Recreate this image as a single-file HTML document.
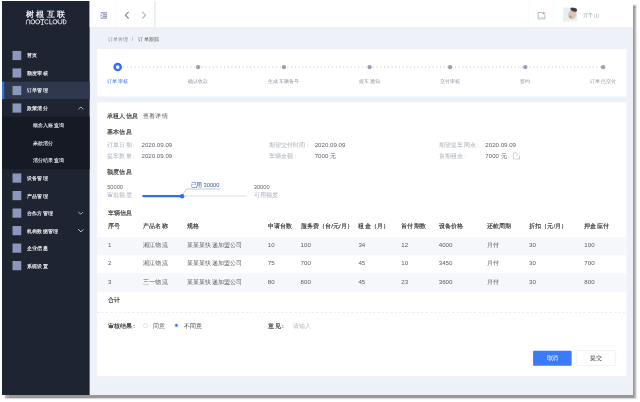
<!DOCTYPE html>
<html><head><meta charset="utf-8">
<style>
*{box-sizing:border-box;margin:0;padding:0}
html,body{width:640px;height:402px;overflow:hidden;background:#fff;font-family:"Liberation Sans",sans-serif}
.shot{position:absolute;left:2px;top:1px;width:631px;height:394px;box-shadow:3px 3.5px 1.5px rgba(0,0,0,.4);background:linear-gradient(90deg,#1f2432 87.6px,#eef1f7 87.6px)}
.clip{position:absolute;left:0;top:0;width:631px;height:394px;overflow:hidden}
.app{position:absolute;left:0;top:0;width:1440px;height:900px;transform:scale(0.43819,0.43778);transform-origin:0 0;background:#eef1f7;color:#333;filter:blur(0.68px)}
.abs{position:absolute}
/* sidebar */
.side{position:absolute;left:0;top:0;width:200px;height:900px;background:#1f2432}
.logo1{position:absolute;left:54px;top:18px;width:92px;font-size:19px;font-weight:bold;color:#e8eaf0;letter-spacing:5px;white-space:nowrap}
.logo2{position:absolute;left:54px;top:40px;width:92px;font-size:13px;color:#e8eaf0;letter-spacing:1.2px;white-space:nowrap}
.mi{position:absolute;left:0;width:200px;height:40px;line-height:40px;color:#f2f4f8;font-size:12px;-webkit-text-stroke:0.3px #f2f4f8}
.mi .ic{position:absolute;left:24px;top:10px;width:20px;height:21px;background:#8b98bc}
.mi .tx{position:absolute;left:57px;top:1px}
.mi.act{background:#2f384d}
.mi.act::before{content:"";position:absolute;left:0;top:0;width:5px;height:40px;background:#2f6ff0}
.mi .ar{position:absolute;left:175px;top:15px;width:10px;height:10px;border-left:2.3px solid #e3e6ec;border-top:2.3px solid #e3e6ec;border-top-left-radius:3px}
.mi .ar.up{transform:rotate(45deg);top:18px}
.mi .ar.dn{transform:rotate(-135deg);top:12.5px}
.sub{position:absolute;left:0;top:264px;width:200px;height:120px;background:#161a24}
.si{position:absolute;left:70px;height:40px;line-height:40px;color:#e6e9ef;font-size:12px;-webkit-text-stroke:0.2px #e6e9ef}
/* header */
.hdr{position:absolute;left:200px;top:0;width:1240px;height:60px;background:#fff;box-shadow:0 2px 4px rgba(30,40,70,.05)}
.vsep{position:absolute;top:0;width:1px;height:60px;background:#eceef2}
/* content */
.bc{position:absolute;left:241px;top:79.5px;font-size:12px;line-height:16px;color:#8a909c;white-space:nowrap}
.bc b{font-weight:normal;color:#333}
.card{position:absolute;left:217px;width:1208px;background:#fff}
.lbl{position:absolute;font-size:12px;color:#8d939e;white-space:nowrap;line-height:16px}
.t14{position:absolute;font-size:14px;color:#333;white-space:nowrap;line-height:18px}
.gray{color:#a0a5ae}
.b{-webkit-text-stroke:0.35px #333}
.row{position:absolute;left:217px;width:1208px;height:42px}
.row.str{background:#f5f7fb}
.cell{position:absolute;font-size:14px;line-height:18px;color:#555;white-space:nowrap}
</style></head><body>
<div class="shot"><div class="clip"><div class="app">

<div class="side">
  <div class="logo1">树根互联</div>
  <svg class="abs" style="left:54px;top:41px" width="94" height="14" viewBox="0 0 94 14"><g fill="none" stroke="#e4e7ed" stroke-width="2.1" stroke-linecap="round" stroke-linejoin="round"><path d="M1.5 11.5 V6 Q1.5 1.5 6 1.5 Q9.5 1.5 9.5 5.5 V11.5"/><ellipse cx="16.5" cy="6.5" rx="4.6" ry="5"/><ellipse cx="27.5" cy="6.5" rx="4.6" ry="5"/><path d="M34 1.5 H42 M38 1.5 V11.5 M36 13 H40"/><path d="M51 2.5 A4.6 5 0 1 0 51 10.5"/><path d="M55 1.5 V11.5 H60.5"/><ellipse cx="67" cy="6.5" rx="4.6" ry="5"/><path d="M74 1.5 V7 Q74 11.5 78.2 11.5 Q82.5 11.5 82.5 7 V1.5"/><path d="M86 1.5 V11.5 H88 Q92.5 11.5 92.5 6.5 Q92.5 1.5 88 1.5 Z"/></g></svg>
  <div class="sub"></div>
  <div class="mi" style="top:104px"><span class="ic"></span><span class="tx">首页</span></div>
  <div class="mi" style="top:144px"><span class="ic"></span><span class="tx">额度审核</span></div>
  <div class="mi act" style="top:184px"><span class="ic"></span><span class="tx">订单管理</span></div>
  <div class="mi" style="top:224px"><span class="ic"></span><span class="tx">政策清分</span><span class="ar up"></span></div>
  <div class="si" style="top:264px">概念入账查询</div>
  <div class="si" style="top:304px">来款清分</div>
  <div class="si" style="top:344px">清分结果查询</div>
  <div class="mi" style="top:384px"><span class="ic"></span><span class="tx">设备管理</span></div>
  <div class="mi" style="top:424px"><span class="ic"></span><span class="tx">产品管理</span></div>
  <div class="mi" style="top:464px"><span class="ic"></span><span class="tx">合作方管理</span><span class="ar dn"></span></div>
  <div class="mi" style="top:504px"><span class="ic"></span><span class="tx">机构数据管理</span><span class="ar dn"></span></div>
  <div class="mi" style="top:544px"><span class="ic"></span><span class="tx">企业信息</span></div>
  <div class="mi" style="top:584px"><span class="ic"></span><span class="tx">系统设置</span></div>
</div>

<div class="hdr">
  <svg class="abs" style="left:24px;top:25px" width="17" height="16" viewBox="0 0 17 16"><g fill="#9aa1b6"><rect x="1" y="0.5" width="15" height="3"/><rect x="6" y="4.8" width="10" height="3"/><rect x="6" y="8.6" width="10" height="3"/><rect x="1" y="12.5" width="15" height="3"/><path d="M1 5 L5 8.2 L1 11.4 Z"/></g></svg>
  <div class="vsep" style="left:61px;background:#f3f4f7"></div>
  <svg class="abs" style="left:78px;top:23px" width="14" height="18" viewBox="0 0 14 18"><path d="M11 2 L3.5 9.5 L11 17" fill="none" stroke="#82858c" stroke-width="2.5"/></svg>
  <svg class="abs" style="left:117px;top:23px" width="14" height="18" viewBox="0 0 14 18"><path d="M3 2 L10.5 9.5 L3 17" fill="none" stroke="#afb2b8" stroke-width="2.4"/></svg>
  <div class="vsep" style="left:148px;width:1.5px;background:#d9dbe0"></div>
  <div class="vsep" style="left:1000px;background:#eef0f3"></div>
  <svg class="abs" style="left:1021px;top:23px" width="22" height="20" viewBox="0 0 22 20"><path d="M11 3 H2.5 V18 H18 V8" fill="none" stroke="#a9aeb9" stroke-width="2"/><path d="M5 14.5 H15.5" stroke="#c9cdd5" stroke-width="1.6"/><circle cx="15" cy="4.8" r="3.2" fill="#f5b5b8"/><circle cx="15" cy="4.8" r="1.7" fill="#ef8d93"/></svg>
  <div class="vsep" style="left:1059px;background:#eef0f3"></div>
  <svg class="abs" style="left:1080px;top:15px" width="32" height="32" viewBox="0 0 32 32"><rect width="32" height="32" fill="#e2e9ee"/><rect x="0" y="0" width="13" height="32" fill="#e9eff3"/><ellipse cx="21.5" cy="15.5" rx="9" ry="11.5" fill="#dfc3b6" transform="rotate(22 21.5 15.5)"/><ellipse cx="25" cy="4.5" rx="8" ry="4.5" fill="#453b37" transform="rotate(18 25 4.5)"/><ellipse cx="17.5" cy="21" rx="4" ry="2.5" fill="#bf9d8e" transform="rotate(25 17.5 21)"/><path d="M7 32 Q12 26 19 27 Q27 27 32 23 V32 Z" fill="#f0f3f6"/></svg>
  <div class="abs" style="left:1126px;top:23px;font-size:12px;color:#8f939b;white-space:nowrap;line-height:18px">万千山</div>
</div>

<div class="bc">订单管理</div><div class="bc" style="left:296px">/</div><div class="bc" style="left:311px;color:#555">订单跟踪</div>

<div class="card" style="top:110px;height:108px">
  <svg class="abs" style="left:0;top:0" width="1208" height="106"><line x1="60" y1="41" x2="1150" y2="41" stroke="#c9cdd8" stroke-width="2.5" stroke-dasharray="2.5 6"/><circle cx="47" cy="41" r="7" fill="#fff" stroke="#2f6ff0" stroke-width="5.5"/><circle cx="230.7" cy="41" r="5" fill="#9aa1b4"/><circle cx="426.3" cy="41" r="5" fill="#9aa1b4"/><circle cx="622" cy="41" r="5" fill="#9aa1b4"/><circle cx="805.6" cy="41" r="5" fill="#9aa1b4"/><circle cx="977.3" cy="41" r="5" fill="#9aa1b4"/><circle cx="1154.9" cy="41" r="5" fill="#9aa1b4"/></svg>
  <div class="abs" style="left:23px;top:66px;width:1162px;display:flex;justify-content:space-between;font-size:12px;line-height:16px;color:#8d939e;white-space:nowrap"><span style="color:#2f6ff0">订单审核</span><span>确认收款</span><span>生成车辆备号</span><span>提车通知</span><span>交付审核</span><span>签约</span><span>订单已交付</span></div>
</div>
<div class="abs" style="left:217px;top:232px;width:1208px;height:625px;background:#fff"></div>
<div class="card" style="top:230px;height:625px;background:transparent">
  <div class="t14 b" style="left:23px;top:24.3px;">承租人信息</div>
  <div class="t14" style="left:105px;top:24.3px;color:#585b61">查看详情</div>
  <div class="t14 b" style="left:23px;top:60.0px;">基本信息</div>
  <div class="t14" style="left:23px;top:88.6px;color:#aab0b8">订单日期<span style="margin-left:3px">:</span></div>
  <div class="t14" style="left:101.4px;top:88.6px;color:#5f6268">2020.09.09</div>
  <div class="t14" style="left:23px;top:113.5px;color:#aab0b8">提车数量<span style="margin-left:3px">:</span></div>
  <div class="t14" style="left:101.4px;top:113.5px;color:#5f6268">2020.09.09</div>
  <div class="t14" style="left:391.8px;top:88.6px;color:#aab0b8">期望交付时间<span style="margin-left:3px">:</span></div>
  <div class="t14" style="left:496.6px;top:88.6px;color:#5f6268">2020.09.09</div>
  <div class="t14" style="left:391.8px;top:113.5px;color:#aab0b8">车辆金额<span style="margin-left:3px">:</span></div>
  <div class="t14" style="left:496.6px;top:113.5px;color:#5f6268">7000 元</div>
  <div class="t14" style="left:780.3px;top:88.6px;color:#aab0b8">期望提车网点<span style="margin-left:3px">:</span></div>
  <div class="t14" style="left:886px;top:88.6px;color:#5f6268">2020.09.09</div>
  <div class="t14" style="left:780.3px;top:113.5px;color:#aab0b8">首期租金<span style="margin-left:3px">:</span></div>
  <div class="t14" style="left:886px;top:113.5px;color:#5f6268">7000 元</div>
  <svg class="abs" style="left:947.5px;top:114.5px" width="18" height="18" viewBox="0 0 18 18"><path d="M10 2 H2 V16 H16 V8" fill="none" stroke="#b8bcc4" stroke-width="1.6"/><path d="M8 10 L16 2" stroke="#b8bcc4" stroke-width="1.6"/></svg>
  <div class="t14 b" style="left:23px;top:150.7px;">额度信息</div>
  <div class="t14" style="left:23px;top:186.4px;color:#666;font-size:13px">50000</div>
  <div class="t14" style="left:23px;top:202.8px;color:#aab0b8">审批额度</div>
  <div class="t14" style="left:357.5px;top:186.4px;color:#666;font-size:13px">30000</div>
  <div class="t14" style="left:357.5px;top:202.8px;color:#aab0b8">可用额度</div>
  <div class="abs" style="left:103px;top:213.5px;width:239px;height:3.5px;background:#e8eaf0;border-radius:2px"></div>
  <div class="abs" style="left:103px;top:212.5px;width:91px;height:5px;background:#2f6ff0;border-radius:3px"></div>
  <svg class="abs" style="left:190px;top:196px" width="100" height="22"><path d="M4 18 L14 3.5 H92" fill="none" stroke="#9fb0d8" stroke-width="1.5"/></svg>
  <div class="abs" style="left:189px;top:210.5px;width:10px;height:10px;background:#2f6ff0;border-radius:50%"></div>
  <div class="t14" style="left:213.4px;top:180.6px;color:#3c5aa8;font-size:13px">已用 30000</div>
  <div class="t14 b" style="left:24px;top:244.8px;">车辆信息</div>
  <div class="abs" style="left:0;top:308.6px;width:1208px;height:42.5px;background:#f5f7fb"></div>
  <div class="abs" style="left:0;top:392.2px;width:1208px;height:41.6px;background:#f5f7fb"></div>
  <div class="t14 b" style="left:24.9px;top:274.3px;">序号</div>
  <div class="t14 b" style="left:105.3px;top:274.3px;">产品名称</div>
  <div class="t14 b" style="left:205.2px;top:274.3px;">规格</div>
  <div class="t14 b" style="left:389.6px;top:274.3px;">申请台数</div>
  <div class="t14 b" style="left:464.4px;top:274.3px;">服务费（台/元/月）</div>
  <div class="t14 b" style="left:596.3px;top:274.3px;">租金（月）</div>
  <div class="t14 b" style="left:694.1px;top:274.3px;">首付期数</div>
  <div class="t14 b" style="left:779.7px;top:274.3px;">设备价格</div>
  <div class="t14 b" style="left:889.6px;top:274.3px;">还款周期</div>
  <div class="t14 b" style="left:985.6px;top:274.3px;">折扣（元/月）</div>
  <div class="t14 b" style="left:1112px;top:274.3px;">押金应付</div>
  <div class="t14" style="left:24.9px;top:319.2px;color:#585b61">1</div>
  <div class="t14" style="left:105.3px;top:319.2px;color:#585b61">湘江物流</div>
  <div class="t14" style="left:205.2px;top:319.2px;color:#585b61">某某某快递加盟公司</div>
  <div class="t14" style="left:389.6px;top:319.2px;color:#585b61">10</div>
  <div class="t14" style="left:464.4px;top:319.2px;color:#585b61">100</div>
  <div class="t14" style="left:596.3px;top:319.2px;color:#585b61">34</div>
  <div class="t14" style="left:694.1px;top:319.2px;color:#585b61">12</div>
  <div class="t14" style="left:779.7px;top:319.2px;color:#585b61">4000</div>
  <div class="t14" style="left:889.6px;top:319.2px;color:#585b61">月付</div>
  <div class="t14" style="left:985.6px;top:319.2px;color:#585b61">30</div>
  <div class="t14" style="left:1112px;top:319.2px;color:#585b61">100</div>
  <div class="t14" style="left:24.9px;top:360.0px;color:#585b61">2</div>
  <div class="t14" style="left:105.3px;top:360.0px;color:#585b61">湘江物流</div>
  <div class="t14" style="left:205.2px;top:360.0px;color:#585b61">某某某快递加盟公司</div>
  <div class="t14" style="left:389.6px;top:360.0px;color:#585b61">75</div>
  <div class="t14" style="left:464.4px;top:360.0px;color:#585b61">700</div>
  <div class="t14" style="left:596.3px;top:360.0px;color:#585b61">45</div>
  <div class="t14" style="left:694.1px;top:360.0px;color:#585b61">10</div>
  <div class="t14" style="left:779.7px;top:360.0px;color:#585b61">3450</div>
  <div class="t14" style="left:889.6px;top:360.0px;color:#585b61">月付</div>
  <div class="t14" style="left:985.6px;top:360.0px;color:#585b61">30</div>
  <div class="t14" style="left:1112px;top:360.0px;color:#585b61">700</div>
  <div class="t14" style="left:24.9px;top:402.6px;color:#585b61">3</div>
  <div class="t14" style="left:105.3px;top:402.6px;color:#585b61">三一物流</div>
  <div class="t14" style="left:205.2px;top:402.6px;color:#585b61">某某某快递加盟公司</div>
  <div class="t14" style="left:389.6px;top:402.6px;color:#585b61">80</div>
  <div class="t14" style="left:464.4px;top:402.6px;color:#585b61">800</div>
  <div class="t14" style="left:596.3px;top:402.6px;color:#585b61">45</div>
  <div class="t14" style="left:694.1px;top:402.6px;color:#585b61">23</div>
  <div class="t14" style="left:779.7px;top:402.6px;color:#585b61">3600</div>
  <div class="t14" style="left:889.6px;top:402.6px;color:#585b61">月付</div>
  <div class="t14" style="left:985.6px;top:402.6px;color:#585b61">30</div>
  <div class="t14" style="left:1112px;top:402.6px;color:#585b61">800</div>
  <div class="t14 b" style="left:24px;top:443.3px;">合计</div>
  <svg class="abs" style="left:0;top:480px" width="1208" height="3"><line x1="0" y1="1.5" x2="1208" y2="1.5" stroke="#e2e5ea" stroke-width="1.6" stroke-dasharray="5 5"/></svg>
  <div class="t14 b" style="left:23.8px;top:502.8px;">审核结果<span style="margin-left:3px">:</span></div>
  <div class="abs" style="left:105px;top:506px;width:11px;height:11px;border:1.5px solid #c0c4cc;border-radius:50%"></div>
  <div class="t14" style="left:126.5px;top:502.8px;color:#555">同意</div>
  <div class="abs" style="left:176px;top:506px;width:11px;height:11px;border:1.3px solid #c3d3f5;border-radius:50%"><div class="abs" style="left:1.2px;top:1.2px;width:6px;height:6px;background:#3a72ea;border-radius:50%"></div></div>
  <div class="t14" style="left:198.3px;top:502.8px;">不同意</div>
  <div class="t14 b" style="left:390.9px;top:502.8px;">意见<span style="margin-left:3px">:</span></div>
  <div class="t14" style="left:446.4px;top:502.8px;color:#b5bac2">请输入</div>
  <div class="abs" style="left:995px;top:568.5px;width:88px;height:34px;background:#3b7bf8;border-radius:2px;color:#fff;font-size:13px;line-height:34px;text-align:center">取消</div>
  <div class="abs" style="left:1093px;top:568px;width:91px;height:35px;background:#fff;border:1px solid #dcdfe6;border-radius:2px;color:#333;font-size:13px;line-height:32px;text-align:center">提交</div>
</div>

</div></div></div>
</body></html>
